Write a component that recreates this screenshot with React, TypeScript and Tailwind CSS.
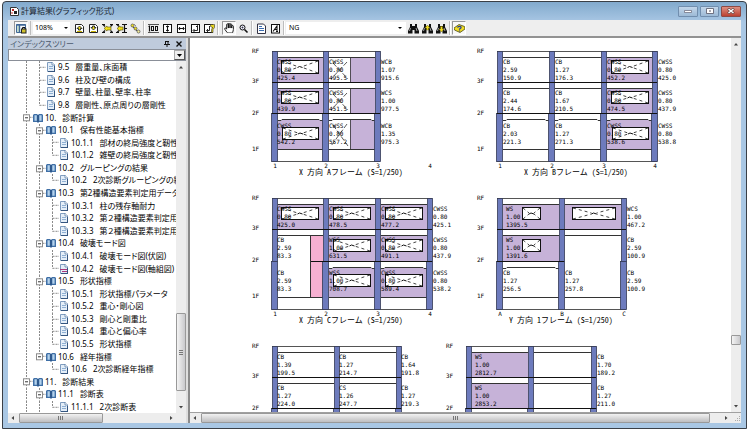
import React from "react";
import { FaHandPaper } from "react-icons/fa";

type Kind = "book" | "doc" | "pinkdoc";
type Guide = "line" | "none" | "tee" | "end" | "box" | "boxend";

interface TreeItem {
  guides: Guide[];
  kind: Kind;
  no: string;
  text: string;
}

const TREE: TreeItem[] = [
  { guides: ["line", "tee"], kind: "doc", no: "9.5", text: "層重量、床面積" },
  { guides: ["line", "tee"], kind: "doc", no: "9.6", text: "柱及び壁の構成" },
  { guides: ["line", "tee"], kind: "doc", no: "9.7", text: "壁量、柱量、壁率、柱率" },
  { guides: ["line", "end"], kind: "doc", no: "9.8", text: "層剛性、原点周りの層剛性" },
  { guides: ["box"], kind: "book", no: "10.", text: "診断計算" },
  { guides: ["line", "box"], kind: "book", no: "10.1", text: "保有性能基本指標" },
  { guides: ["line", "line", "tee"], kind: "doc", no: "10.1.1", text: "部材の終局強度と靭性" },
  { guides: ["line", "line", "end"], kind: "doc", no: "10.1.2", text: "雑壁の終局強度と靭性" },
  { guides: ["line", "box"], kind: "book", no: "10.2", text: "グルーピングの結果" },
  { guides: ["line", "line", "end"], kind: "doc", no: "10.2", text: "2次診断グルーピングの結" },
  { guides: ["line", "box"], kind: "book", no: "10.3", text: "第2種構造要素判定用データ" },
  { guides: ["line", "line", "tee"], kind: "doc", no: "10.3.1", text: "柱の残存軸耐力" },
  { guides: ["line", "line", "tee"], kind: "doc", no: "10.3.2", text: "第２種構造要素判定用" },
  { guides: ["line", "line", "end"], kind: "doc", no: "10.3.3", text: "第２種構造要素判定用" },
  { guides: ["line", "box"], kind: "book", no: "10.4", text: "破壊モード図" },
  { guides: ["line", "line", "tee"], kind: "doc", no: "10.4.1", text: "破壊モード図(伏図)" },
  { guides: ["line", "line", "end"], kind: "pinkdoc", no: "10.4.2", text: "破壊モード図(軸組図)" },
  { guides: ["line", "box"], kind: "book", no: "10.5", text: "形状指標" },
  { guides: ["line", "line", "tee"], kind: "doc", no: "10.5.1", text: "形状指標パラメータ" },
  { guides: ["line", "line", "tee"], kind: "doc", no: "10.5.2", text: "重心・剛心図" },
  { guides: ["line", "line", "tee"], kind: "doc", no: "10.5.3", text: "剛心と剛重比" },
  { guides: ["line", "line", "tee"], kind: "doc", no: "10.5.4", text: "重心と偏心率" },
  { guides: ["line", "line", "end"], kind: "doc", no: "10.5.5", text: "形状指標" },
  { guides: ["line", "boxend"], kind: "book", no: "10.6", text: "経年指標" },
  { guides: ["line", "none", "end"], kind: "doc", no: "10.6", text: "2次診断経年指標" },
  { guides: ["box"], kind: "book", no: "11.", text: "診断結果" },
  { guides: ["line", "box"], kind: "book", no: "11.1", text: "診断表" },
  { guides: ["line", "line", "end"], kind: "doc", no: "11.1.1", text: "2次診断表" },
];

function GuideCell({ type }: { type: Guide }) {
  const half = type === "end" || type === "boxend";
  const branch = type !== "line" && type !== "none";
  return (
    <svg className="h-full w-[13px] shrink-0" stroke="#8a8a8a" strokeDasharray="2 1">
      {type !== "none" && <line x1="6.5" y1="0" x2="6.5" y2={half ? "50%" : "100%"} />}
      {branch && <line x1="6.5" y1="50%" x2="13" y2="50%" />}
      {(type === "box" || type === "boxend") && (
        <svg y="50%" overflow="visible" strokeDasharray="none">
          <rect x="3.5" y="-2.5" width="6" height="6" fill="#fff" stroke="#8c8c8c" />
          <path d="M5 .5h3" stroke="#333" />
        </svg>
      )}
    </svg>
  );
}

function TreeIcon({ kind }: { kind: Kind }) {
  if (kind === "book") {
    return (
      <svg className="h-2.5 w-3 shrink-0" viewBox="0 0 12 10">
        <path d="M0 2l1-1h3l1 1 1-1h3l1 1v7H6L5 10 4 9H0z" fill="#3f6fa6" />
        <path d="M1.5 2.2h2.3v5.6H1.5zM6.3 2.2h2.3v5.6H6.3z" fill="#b4d2ec" />
        <path d="M5 2v7" stroke="#1f4474" />
      </svg>
    );
  }
  return (
    <svg className="h-2.5 w-3 shrink-0" viewBox="0 0 12 10">
      <path d="M1.5.5h5l2 2v7h-7z" fill="#e4eef8" stroke="#7f9cbf" />
      <path d="M6 0v3h3" fill="#fff" stroke="#5b7da6" strokeWidth=".8" />
      {kind === "pinkdoc" ? (
        <path d="M1 5.5h8M3 7.5h5" stroke="#a8377c" strokeWidth="1.2" />
      ) : (
        <path d="M3 4.5h4M3 6.5h4" stroke="#8fb0d4" />
      )}
      <path d="M2 9.5h7M8.5 4v6" stroke="#34557f" />
    </svg>
  );
}

/* ---------- toolbar ---------- */

interface ToolProps {
  label: string;
  pressed?: boolean;
  children: React.ReactNode;
}

function Tool({ label, pressed = false, children }: ToolProps) {
  return (
    <button
      type="button"
      aria-label={label}
      className={
        pressed
          ? "flex h-[14px] w-[14px] shrink-0 items-center justify-center border border-[#999] border-r-white border-b-white bg-[#f8f8f8]"
          : "flex h-[14px] w-[14px] shrink-0 items-center justify-center"
      }
    >
      {children}
    </button>
  );
}

function Icon({ children }: { children: React.ReactNode }) {
  return (
    <svg className="h-[11px] w-[11px] shrink-0" viewBox="0 0 11 11" fill="none" stroke="#111">
      {children}
    </svg>
  );
}

function Sep() {
  return <div className="mx-[1px] h-[14px] w-[2px] shrink-0 border-l border-[#bdbdbd] bg-white" />;
}

function PageIcon({ up }: { up: boolean }) {
  return (
    <Icon>
      <path d="M1.5 1.500h6l2 2v6h-8z" fill="#fff" stroke="#222" />
      <path
        d={up ? "M5.500 3L8 5.500H6.500V7h-2V5.500H3z" : "M4.500 3h2v1.500H8L5.500 7 3 4.500h1.500z"}
        fill="#f0df1d"
        stroke="#222"
        strokeWidth=".9"
      />
      <path d="M3 8.500h5" stroke="#c9b200" />
    </Icon>
  );
}

function Binoculars({ accent }: { accent?: string }) {
  return (
    <Icon>
      <path d="M2 1h2v2h3V1h2v3l2 4v2.500H6.500V7h-2v3.500H0V8l2-4z" fill="#111" stroke="none" />
      <path d="M2.500 5L1.500 8M8 5l1 3" stroke="#ddd" strokeWidth=".7" />
      {accent && <path d={accent} fill="#f2dd20" stroke="#6b6000" strokeWidth=".4" />}
    </Icon>
  );
}

function Toolbar() {
  return (
    <div className="flex h-4 shrink-0 items-center bg-[#eeeeee] pl-1.5">
      <Tool label="ページ固定" pressed>
        <Icon>
          <path d="M.5 1.500h9v8h-9z" fill="#f4f8fc" stroke="#3f6796" />
          <path d="M.5 2h9M3.500 2v7.500" stroke="#3f6796" strokeWidth="1.400" />
          <path d="M1.500 4h1M1.500 6h1M1.500 8h1" stroke="#3a8a4a" />
          <rect x="5.500" y="6" width="4.500" height="4" fill="#cfc02c" stroke="#222" />
          <path d="M6.500 6V4.500h2.500V6" />
        </Icon>
      </Tool>
      <div className="mx-[2px] h-[14px] w-[1px] shrink-0 bg-[#bdbdbd]" />
      <button
        type="button"
        aria-label="表示倍率"
        className="mr-[2px] flex h-3 w-[37px] shrink-0 items-center justify-between bg-white pr-[2px] pl-[2px] text-[7px] leading-3"
      >
        <span>108%</span>
        <svg className="h-[2px] w-[4px]" viewBox="0 0 4 2">
          <path d="M0 0h4L2 2z" />
        </svg>
      </button>
      <Tool label="前のページ">
        <PageIcon up />
      </Tool>
      <Tool label="次のページ">
        <PageIcon up={false} />
      </Tool>
      <Tool label="前の項目">
        <Icon>
          <path d="M0 1.500h3M8 1.500h3M0 9.500h3M8 9.500h3M1 1.500l2 2M1 9.500l2-2M8.500 3.500l2-2M8.500 7.500l2 2" strokeWidth="1.200" />
          <path d="M2 5.500L5 3v1h4v3H5v1z" fill="#f0df1d" stroke="#554d00" strokeWidth=".6" />
        </Icon>
      </Tool>
      <Tool label="次の項目">
        <Icon>
          <path d="M0 1.500h3M6 1.500h5M0 9.500h3M6 9.500h5M1 1.500l2 2M1 9.500l2-2M8.500 1.500v8M8 5.500h3" strokeWidth="1.200" />
          <path d="M1 5.500L4 3v1h3v3H4v1z" fill="#f0df1d" stroke="#554d00" strokeWidth=".6" />
        </Icon>
      </Tool>
      <Tool label="リンク">
        <Icon>
          <path d="M2 3l6 6" stroke="#555" />
          <circle cx="2.500" cy="2.500" r="1.500" fill="#f0df1d" stroke="#555" strokeWidth=".8" />
          <circle cx="5.500" cy="5.500" r="1.500" fill="#f0df1d" stroke="#555" strokeWidth=".8" />
          <circle cx="8.500" cy="8.500" r="1.500" fill="#f5ef9a" stroke="#555" strokeWidth=".8" />
          <path d="M4 1l2 2" stroke="#777" strokeWidth=".8" />
        </Icon>
      </Tool>
      <Sep />
      <Tool label="100%表示">
        <Icon>
          <path d="M0 1.500h11M0 9.500h11" stroke="#555" />
          <path d="M1.500 2.500v6M.5 3.500h1" strokeWidth="1.200" />
          <rect x="3.500" y="3.500" width="2" height="4" />
          <rect x="7.500" y="3.500" width="2" height="4" />
        </Icon>
      </Tool>
      <Tool label="高さに合わせる">
        <Icon>
          <rect x="1.500" y="1.500" width="8" height="8" fill="#fff" />
          <path d="M5.500 3v5M4 4l1.500-1.200L7 4M4 7l1.500 1.200L7 7" />
        </Icon>
      </Tool>
      <Tool label="幅に合わせる">
        <Icon>
          <rect x="1.500" y="1.500" width="8" height="8" fill="#fff" />
          <path d="M3 5.500h5M4 4L2.800 5.500 4 7M7 4l1.200 1.500L7 7" />
        </Icon>
      </Tool>
      <Tool label="全体表示">
        <Icon>
          <rect x="1.500" y="1.500" width="8" height="8" fill="#fff" />
          <path d="M7.500 2.500v5h-4M4.500 6l-1.500 1.500 1.500 1.500M6 4l1.500-1.500" strokeWidth=".9" />
        </Icon>
      </Tool>
      <Tool label="範囲表示">
        <Icon>
          <rect x=".5" y="1.500" width="8" height="8" fill="#fff" />
          <path d="M5.500 3v4.500H3M4 6L2.500 7.500 4 9" strokeWidth=".9" />
          <path d="M6.500 1.500h4v3L9 6.500v3H7.500v-3l1-2-2-1z" fill="#e8d51f" stroke="#333" strokeWidth=".6" />
        </Icon>
      </Tool>
      <Sep />
      <div className="w-[2px] shrink-0" />
      <Tool label="移動" pressed>
        <FaHandPaper className="h-[10px] w-[10px] fill-white stroke-black stroke-[44]" />
      </Tool>
      <Tool label="拡大">
        <Icon>
          <circle cx="4.500" cy="4.500" r="2.500" fill="#eef" />
          <path d="M3.500 4.500h2M4.500 3.500v2" strokeWidth=".6" />
          <path d="M6.500 6.500l3 3" strokeWidth="1.600" />
        </Icon>
      </Tool>
      <Sep />
      <Tool label="文書">
        <Icon>
          <path d="M1.500 1h6l2 2v7.500h-8z" fill="#fff" stroke="#334" />
          <path d="M3 3.500h3M3 5.500h5M3 7.500h5" stroke="#3c6cb0" />
        </Icon>
      </Tool>
      <Tool label="フォント">
        <Icon>
          <rect x="1.500" y="1.500" width="8" height="8.500" fill="#fff" />
          <path d="M3 8.500L7 3v5.500M4.500 6.500H7M6 8.500h2" strokeWidth="1.100" />
        </Icon>
      </Tool>
      <Sep />
      <div className="flex h-3 w-[120px] shrink items-center bg-white pr-1 pl-[3px]">
        <input
          aria-label="検索文字列"
          defaultValue="NG"
          className="h-3 min-w-0 flex-1 bg-transparent text-[7px] leading-3 outline-none"
        />
        <svg className="h-[2px] w-[4px]" viewBox="0 0 4 2">
          <path d="M0 0h4L2 2z" />
        </svg>
      </div>
      <Tool label="検索">
        <Binoculars />
      </Tool>
      <Tool label="前を検索">
        <Binoculars accent="M5.500 2L8 5H6.500v2h-2V5H3z" />
      </Tool>
      <Tool label="次を検索">
        <Binoculars accent="M4.500 3.500h2V6H8L5.500 9 3 6h1.500z" />
      </Tool>
      <Sep />
      <Tool label="ヘルプ" pressed>
        <Icon>
          <path d="M0 5l5-3.500 5.500 2L11 6 6 9.500.5 7z" fill="#f1dc22" stroke="#4a4a10" strokeWidth=".8" />
          <path d="M3.500 4.500C4 3 7.500 3 7 4.700 6.500 5.700 5.500 5.500 5.500 6.800M5.500 7.500v1" stroke="#223c9a" strokeWidth="1.300" />
        </Icon>
      </Tool>
    </div>
  );
}

/* ---------- scroll bars ---------- */

function Arrow({ dir }: { dir: "up" | "down" | "left" | "right" }) {
  const d = {
    up: "M3 2l2 2.500h-4z",
    down: "M3 4.500L1 2h4z",
    left: "M1.500 3L4 1v4z",
    right: "M4.500 3L2 1v4z",
  }[dir];
  return (
    <svg className="h-1.5 w-1.5 shrink-0" viewBox="0 0 6 6" fill="#444">
      <path d={d} />
    </svg>
  );
}

interface BarProps {
  before: number;
  size: number;
  after: number;
}

function VBar({ before, size, after }: BarProps) {
  return (
    <div className="flex w-2.5 shrink-0 flex-col items-center bg-[#ededed] py-[3px]">
      <Arrow dir="up" />
      <div style={{ flexGrow: before }} />
      <div
        className="flex w-2.5 flex-col items-center justify-center gap-px rounded-[1px] border border-[#999] bg-linear-to-r from-[#f4f4f4] to-[#c9c9cc]"
        style={{ flexGrow: size }}
      >
        {size > 20 && (
          <>
            <div className="h-px w-1 bg-[#777]" />
            <div className="h-px w-1 bg-[#777]" />
            <div className="h-px w-1 bg-[#777]" />
          </>
        )}
      </div>
      <div style={{ flexGrow: after }} />
      <Arrow dir="down" />
    </div>
  );
}

function HBar({ before, size, after }: BarProps) {
  return (
    <div className="flex h-full min-w-0 flex-1 items-center bg-[#ededed] px-[2px]">
      <Arrow dir="left" />
      <div style={{ flexGrow: before }} />
      <div
        className="flex h-full items-center justify-center gap-px rounded-[1px] border border-[#999] bg-linear-to-b from-[#f2f2f2] to-[#bebec0]"
        style={{ flexGrow: size }}
      >
        <div className="h-1 w-px bg-[#777]" />
        <div className="h-1 w-px bg-[#777]" />
        <div className="h-1 w-px bg-[#777]" />
      </div>
      <div style={{ flexGrow: after }} />
      <Arrow dir="right" />
    </div>
  );
}

/* ---------- sidebar ---------- */

function Sidebar() {
  return (
    <aside className="flex w-[178px] shrink-0 flex-col bg-white">
      <div className="flex h-[11px] shrink-0 items-center bg-[#bfcbdc] pr-1 pl-[2px] text-[#4c5a6e]">
        <h2 className="flex-1 text-[8px] leading-[11px] [font-feature-settings:'palt']">インデックスツリー</h2>
        <button type="button" aria-label="固定" className="mr-1.5">
          <svg className="h-1.5 w-1.5" viewBox="0 0 6 6" fill="none" stroke="#111">
            <path d="M1.500 0v3.500M4 0v3.500M1 .5h4M0 3.500h6M3 4v2" />
          </svg>
        </button>
        <button type="button" aria-label="閉じる">
          <svg className="h-1.5 w-1.5" viewBox="0 0 6 6" stroke="#111" strokeWidth="1.400">
            <path d="M.5.5l5 5M5.500.5l-5 5" />
          </svg>
        </button>
      </div>
      <button
        type="button"
        aria-label="項目の選択"
        className="flex h-[12px] shrink-0 items-center justify-end border border-[#8a8f98] bg-white"
      >
        <span className="flex h-[10px] w-[11px] items-center justify-center border border-[#aaa] border-r-[#555] border-b-[#555] bg-[#eee]">
          <svg className="h-[3px] w-[5px]" viewBox="0 0 5 3">
            <path d="M0 0h5L2.500 3z" />
          </svg>
        </span>
      </button>
      <div className="flex min-h-0 flex-1">
        <ul className="flex min-w-0 flex-1 flex-col overflow-hidden">
          {TREE.map((item, i) => (
            <li key={i} className="flex min-h-0 flex-1 items-center pl-3">
              {item.guides.map((g, j) => (
                <GuideCell key={j} type={g} />
              ))}
              <TreeIcon kind={item.kind} />
              <span className="text-[8px] leading-3 whitespace-nowrap [font-feature-settings:'palt']">
                {item.no}
                <span className="ml-1.5">{item.text}</span>
              </span>
            </li>
          ))}
        </ul>
        <VBar before={242} size={70} after={13} />
      </div>
      <div className="flex h-2.5 shrink-0">
        <HBar before={3} size={80} after={68} />
        <div className="w-2.5 bg-[#ededed]" />
      </div>
    </aside>
  );
}

/* ---------- frame elevations ---------- */

type Box = [x: number, y: number, w: number, h: number];
type Note = [x: number, row: 0 | 1 | 2, a: string, b: string, c: string];

interface ElevationProps {
  x: number;
  y: number;
  cols: number[];
  levels: number[];
  cut?: number;
  axes?: string[];
  axisX?: number[];
  caption?: string;
  captionX?: number;
  beams: [x1: number, x2: number, level: number][];
  arcs?: [x1: number, x2: number][];
  walls?: Box[];
  pink?: Box[];
  windows?: Box[];
  doors?: Box[];
  notes: Note[];
}

const ROW_Y = [13, 44, 77];
const FLOORS: [string, number][] = [
  ["RF", 2],
  ["3F", 32],
  ["2F", 64],
  ["1F", 100],
];

function Elevation(p: ElevationProps) {
  const last = p.cols[p.cols.length - 1];
  const bottom = p.cut ?? p.levels[7];
  return (
    <g transform={`translate(${p.x} ${p.y})`}>
      {p.walls?.map(([x, y, w, h], i) => (
        <rect key={i} x={x} y={y} width={w} height={h} fill="#c6b2d8" />
      ))}
      {p.pink?.map(([x, y, w, h], i) => (
        <rect key={i} x={x} y={y} width={w} height={h} fill="#f6b0d1" />
      ))}
      <g stroke="#333" fill="none" shapeRendering="crispEdges">
        {p.pink?.map(([x, y, , h], i) => <path key={i} d={`M${x} ${y}v${h}`} />)}
        <path d={`M0 .5H${last + 5}`} stroke="#555" />
        {!p.cut && <path d={`M0 ${bottom}.5H${last + 5}`} stroke="#555" />}
        {p.beams.map(([x1, x2, l], i) => (
          <path key={i} d={`M${x1} ${p.levels[l]}.5H${x2}`} />
        ))}
      </g>
      {p.arcs?.map(([a, b], i) => {
        const y = p.levels[5];
        return (
          <path key={i} d={`M${a} ${y + 1.5}h3l1-1H${b - 4}l1 1h3`} fill="none" stroke="#333" />
        );
      })}
      {p.cols.map((x) => (
        <g key={x} fill="#6d7bbd" stroke="#333a55" strokeWidth=".8">
          <rect x={x + 0.5} y=".5" width="5" height={Math.min(bottom, p.levels[4])} />
          <rect x={x - 0.5} y={p.levels[4] + 0.5} width="6" height={bottom - p.levels[4]} />
        </g>
      ))}
      {p.beams.map(([x1, x2, l], i) =>
        l === 2 || l === 4 ? (
          <path key={i} d={`M${x1 - 6} ${p.levels[l]}.5H${x2 + 5}`} stroke="#111" shapeRendering="crispEdges" />
        ) : null
      )}
      {p.windows?.map(([x, y, w, h], i) => (
        <g key={i} fill="none" stroke="#111">
          <rect x={x + 0.5} y={y + 0.5} width={w} height={h} fill="#fff" />
          <path
            d={`M${x + 1} ${y + 1}l${w / 2 - 3} ${h / 2 - 1}M${x + w} ${y + 1}l${3 - w / 2} ${h / 2 - 1}M${x + 1} ${y + h}l${w / 2 - 3} ${1 - h / 2}M${x + w} ${y + h}l${3 - w / 2} ${1 - h / 2}`}
            strokeDasharray="3 3"
            strokeWidth=".8"
          />
          <path d={`M${x + w / 2 - 2} ${y + h / 2 + 1}l2-1 3 1`} />
        </g>
      ))}
      {p.doors?.map(([x, y, w, h], i) => (
        <g key={i} fill="none" stroke="#333" strokeWidth=".8">
          <path d={`M${x + w}.5 ${y}v${h}`} />
          <path d={`M${x + 4} ${y + 5}L${x + w - 2} ${y + h - 3}M${x + w - 3} ${y + 4}L${x + 2} ${y + h - 3}`} strokeDasharray="5 2" />
        </g>
      ))}
      {p.notes.map(([x, row, a, b, c], i) => (
        <text key={i} y={ROW_Y[row]}>
          <tspan x={x}>{a}</tspan>
          <tspan x={x} dy="8">
            {b}
          </tspan>
          <tspan x={x} dy="8">
            {c}
          </tspan>
        </text>
      ))}
      {FLOORS.slice(0, p.cut ? 3 : 4).map(([name, y]) => (
        <text key={name} x="-20" y={y}>
          {name}
        </text>
      ))}
      {p.axes?.map((a, i) => (
        <text key={a} x={(p.axisX ?? p.cols)[i] + 3} y={p.levels[7] + 7} textAnchor="middle">
          {a}
        </text>
      ))}
      {p.caption && (
        <text
          x={p.captionX ?? 27}
          y={p.levels[7] + 14}
          className="font-['Noto_Sans_CJK_JP',sans-serif] text-[8px] [font-feature-settings:'hwid']"
        >
          {p.caption}
        </text>
      )}
    </g>
  );
}

const UPPER = [0, 6, 31, 37, 62, 68, 98, 110];
const LOWER = [0, 6, 31, 37, 63, 69, 99, 111];
const GRID = [0, 51, 103, 155];

function Drawing() {
  return (
    <svg
      width="541"
      height="375"
      viewBox="0 0 541 375"
      className="shrink-0 font-['DejaVu_Sans_Mono',monospace] text-[6px]"
    >
      <Elevation
        x={82}
        y={13}
        cols={[0, 51, 103]}
        levels={UPPER}
        axes={["1", "2", "3", "4"]}
        axisX={GRID}
        caption="X 方向 Aフレーム (S=1/250)"
        beams={[
          [6, 51, 1], [57, 103, 1],
          [6, 51, 2], [57, 103, 2],
          [6, 51, 3], [57, 103, 3],
          [6, 51, 4], [57, 103, 4],
          [6, 51, 6], [57, 103, 6],
        ]}
        arcs={[[6, 51], [57, 103]]}
        walls={[
          [6, 7, 45, 24], [78, 7, 25, 24],
          [6, 38, 45, 24], [78, 38, 25, 24],
          [6, 69, 45, 29], [78, 69, 25, 29],
        ]}
        windows={[[9, 9, 37, 13], [9, 40, 37, 12], [10, 76, 36, 12]]}
        doors={[[57, 7, 21, 24], [57, 38, 21, 24], [57, 69, 21, 29]]}
        notes={[
          [5, 0, "CWSS", "0.80", "425.4"],
          [5, 1, "CWSS", "0.80", "439.9"],
          [5, 2, "CWSS", "0.80", "542.2"],
          [57, 0, "CWSS", "0.80", "495.5"],
          [57, 1, "CWSS", "0.80", "451.5"],
          [57, 2, "CWSS", "0.80", "557.2"],
          [109, 0, "WCB", "1.07", "915.6"],
          [109, 1, "WCS", "1.00", "977.5"],
          [109, 2, "WCB", "1.35", "975.3"],
        ]}
      />
      <Elevation
        x={307}
        y={13}
        cols={[0, 52, 104, 155]}
        levels={UPPER}
        axes={["1", "2", "3", "4"]}
        caption="X 方向 Bフレーム (S=1/250)"
        beams={[
          [6, 52, 1], [58, 104, 1], [110, 155, 1],
          [6, 52, 2], [58, 104, 2], [110, 155, 2],
          [6, 52, 3], [58, 104, 3], [110, 155, 3],
          [6, 52, 4], [58, 104, 4], [110, 155, 4],
          [6, 52, 6], [58, 104, 6], [110, 155, 6],
        ]}
        arcs={[[6, 52], [58, 104], [110, 155]]}
        walls={[[110, 7, 45, 24], [110, 38, 45, 24], [110, 69, 45, 29]]}
        windows={[[114, 9, 37, 13], [114, 40, 37, 12], [115, 76, 36, 12]]}
        notes={[
          [6, 0, "CB", "2.59", "150.9"],
          [6, 1, "CB", "2.44", "174.6"],
          [6, 2, "CB", "2.03", "221.3"],
          [58, 0, "CB", "1.27", "176.3"],
          [58, 1, "CB", "1.67", "210.5"],
          [58, 2, "CB", "1.27", "271.3"],
          [110, 0, "CWSS", "0.80", "452.2"],
          [110, 1, "CWSS", "0.80", "474.5"],
          [110, 2, "CWSS", "0.80", "538.6"],
          [161, 0, "CWSS", "0.80", "425.0"],
          [161, 1, "CWSS", "0.80", "437.9"],
          [161, 2, "CWSS", "0.80", "538.8"],
        ]}
      />
      <Elevation
        x={82}
        y={160}
        cols={GRID}
        levels={LOWER}
        axes={["1", "2", "3", "4"]}
        caption="X 方向 Cフレーム (S=1/250)"
        beams={[
          [6, 51, 1], [57, 103, 1], [109, 155, 1],
          [6, 51, 2], [57, 103, 2], [109, 155, 2],
          [6, 51, 3], [57, 103, 3], [109, 155, 3],
          [45, 51, 4], [57, 103, 4], [109, 155, 4],
          [6, 51, 6], [57, 103, 6], [109, 155, 6],
        ]}
        arcs={[[57, 103], [109, 155]]}
        walls={[
          [6, 7, 45, 24], [57, 7, 46, 24], [109, 7, 46, 24],
          [57, 38, 46, 25], [109, 38, 46, 25],
          [57, 70, 46, 29], [109, 70, 46, 29],
        ]}
        pink={[[38, 38, 13, 61]]}
        windows={[
          [9, 9, 37, 12], [61, 9, 37, 12], [113, 9, 37, 12],
          [61, 41, 37, 12], [113, 41, 37, 12],
          [61, 76, 37, 12], [113, 76, 37, 12],
        ]}
        notes={[
          [5, 0, "CWSS", "0.80", "425.0"],
          [5, 1, "CB", "2.59", "83.3"],
          [5, 2, "CB", "2.59", "83.3"],
          [57, 0, "CWSS", "0.80", "478.5"],
          [57, 1, "WSS", "1.00", "631.5"],
          [57, 2, "WSS", "1.00", "708.7"],
          [109, 0, "CWSS", "0.80", "477.2"],
          [109, 1, "CWSS", "0.80", "491.1"],
          [109, 2, "CWSS", "0.80", "589.4"],
          [161, 0, "CWSS", "0.80", "425.1"],
          [161, 1, "CWSS", "0.80", "437.9"],
          [161, 2, "CWSS", "0.80", "538.2"],
        ]}
      />
      <Elevation
        x={307}
        y={160}
        cols={[0, 62, 124]}
        levels={LOWER}
        axes={["A", "B", "C"]}
        caption="Y 方向 1フレーム (S=1/250)"
        captionX={12}
        beams={[
          [6, 62, 1], [68, 124, 1],
          [6, 62, 2], [68, 124, 2],
          [6, 62, 3], [68, 124, 3],
          [6, 62, 4],
          [6, 62, 6], [68, 124, 6],
        ]}
        arcs={[[6, 62]]}
        walls={[[6, 7, 56, 24], [68, 7, 56, 24], [6, 38, 56, 25]]}
        windows={[[25, 9, 18, 12], [75, 9, 43, 12], [25, 41, 18, 12]]}
        notes={[
          [9, 0, "WS", "1.00", "1395.5"],
          [9, 1, "WS", "1.00", "1391.6"],
          [6, 2, "CB", "1.27", "256.5"],
          [68, 2, "CB", "1.27", "257.8"],
          [130, 0, "WCS", "1.00", "467.2"],
          [130, 1, "CB", "2.59", "100.9"],
          [130, 2, "CB", "2.59", "100.9"],
        ]}
      />
      <Elevation
        x={82}
        y={308}
        cols={[0, 62, 124]}
        levels={UPPER}
        cut={80}
        beams={[
          [6, 62, 1], [68, 124, 1],
          [6, 62, 2], [68, 124, 2],
          [6, 62, 3], [68, 124, 3],
          [6, 62, 4], [68, 124, 4],
        ]}
        notes={[
          [5, 0, "CB", "1.39", "199.5"],
          [5, 1, "CB", "1.27", "224.0"],
          [67, 0, "CB", "1.27", "214.7"],
          [67, 1, "CS", "1.26", "247.7"],
          [129, 0, "CB", "1.64", "191.8"],
          [129, 1, "CB", "1.27", "219.3"],
        ]}
      />
      <Elevation
        x={276}
        y={308}
        cols={[0, 62, 125]}
        levels={UPPER}
        cut={80}
        beams={[
          [6, 62, 1], [68, 125, 1],
          [6, 62, 2], [68, 125, 2],
          [6, 62, 3], [68, 125, 3],
          [6, 62, 4], [68, 125, 4],
        ]}
        walls={[[6, 7, 56, 24], [6, 38, 56, 24]]}
        notes={[
          [9, 0, "WS", "1.00", "2812.7"],
          [9, 1, "WS", "1.00", "2853.2"],
          [131, 0, "CB", "1.70", "189.2"],
          [131, 1, "CB", "1.27", "211.0"],
        ]}
      />
    </svg>
  );
}

/* ---------- window ---------- */

function TitleBar() {
  return (
    <header className="flex h-[18px] shrink-0 items-center pl-[2px]">
      <svg className="mr-[2px] h-[9px] w-[9px]" viewBox="0 0 9 9">
        <path d="M.5.5h6l2 2v6h-8z" fill="#fff" stroke="#333" />
        <path d="M2 2h2v2H2z" fill="#b22" />
        <path d="M4 4h3v3H4z" fill="#222" />
        <path d="M2 5v2" stroke="#c33" />
      </svg>
      <h1 className="flex-1 text-[8px] leading-4 whitespace-nowrap text-[#1c2733] [font-feature-settings:'palt']">
        計算結果(グラフィック形式)
      </h1>
      <div className="flex gap-[2px]">
        <button
          type="button"
          aria-label="最小化"
          className="flex h-[11px] w-[20px] items-center justify-center rounded-[1px] border border-[#718eae] bg-linear-to-b from-[#c3d6ea] to-[#9dbad6]"
        >
          <svg className="h-1 w-2" viewBox="0 0 8 4">
            <path d="M.5 1.500h7v2h-7z" fill="#fff" stroke="#667" strokeWidth=".7" />
          </svg>
        </button>
        <button
          type="button"
          aria-label="最大化"
          className="flex h-[11px] w-[19px] items-center justify-center rounded-[1px] border border-[#718eae] bg-linear-to-b from-[#c3d6ea] to-[#9dbad6]"
        >
          <svg className="h-1.5 w-2" viewBox="0 0 8 6">
            <path d="M.5.5h7v5h-7z" fill="#fff" stroke="#556" strokeWidth=".8" />
            <path d="M3 2.500h2v1H3z" fill="#556" />
          </svg>
        </button>
        <button
          type="button"
          aria-label="閉じる"
          className="flex h-[11px] w-[20px] items-center justify-center rounded-[1px] border border-[#8d4a45] bg-linear-to-b from-[#dd8f82] to-[#bb4031]"
        >
          <svg className="h-1.5 w-2" viewBox="0 0 8 6">
            <path d="M1 .5l6 5M7 .5l-6 5" stroke="#644" strokeWidth="2.600" />
            <path d="M1.500 1l5 4M6.500 1l-5 4" stroke="#fff" strokeWidth="1.500" />
          </svg>
        </button>
      </div>
    </header>
  );
}

export default function App() {
  return (
    <div className="h-screen bg-white pt-px pr-[3px] pb-[1px] pl-[2px] font-['Noto_Sans','Noto_Sans_CJK_JP',sans-serif] text-black">
      <div className="flex h-full flex-col rounded-t-[4px] border border-[#3a3f46] bg-[#a9c7e4] bg-linear-to-b from-[#82aacd] to-[#a9c7e4] to-[20px] px-[5px] pb-[5px]">
        <TitleBar />
        <Toolbar />
        <div className="h-[2px] shrink-0 bg-[#929292]" />
        <div className="flex min-h-0 flex-1">
          <Sidebar />
          <div className="w-[4px] shrink-0 border-r-2 border-[#8a8a8a] bg-[#dedede]" />
          <main className="flex min-w-0 flex-1 flex-col">
            <div className="flex min-h-0 flex-1">
              <div className="min-w-0 flex-1 overflow-hidden bg-white">
                <Drawing />
              </div>
              <VBar before={293} size={8} after={59} />
            </div>
            <div className="flex h-[11px] shrink-0 border-t border-[#a0a0a0]">
              <HBar before={3} size={507} after={13} />
              <div className="flex w-2.5 items-end justify-end bg-[#ededed]">
                <svg className="h-2 w-2" viewBox="0 0 8 8" fill="#aaa">
                  <path d="M6 1h1v1H6zM4 3h1v1H4zM6 3h1v1H6zM2 5h1v1H2zM4 5h1v1H4zM6 5h1v1H6z" />
                </svg>
              </div>
            </div>
          </main>
        </div>
      </div>
    </div>
  );
}
